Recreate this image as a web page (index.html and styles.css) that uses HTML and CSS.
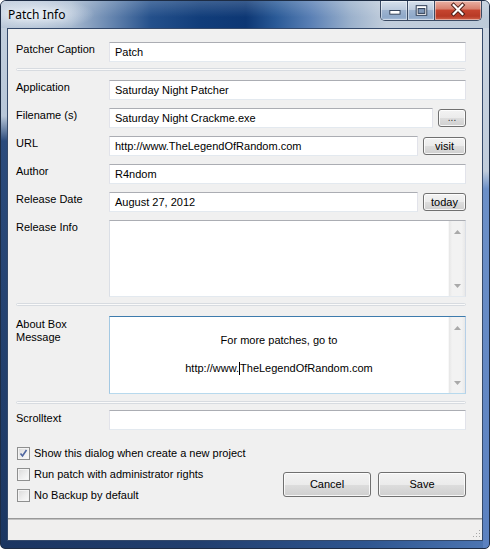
FILE: index.html
```html
<!DOCTYPE html>
<html>
<head>
<meta charset="utf-8">
<title>Patch Info</title>
<link rel="stylesheet" href="styles.css">
</head>
<body>
<div class="window">
  <div class="titlebar">
    <span class="title">Patch Info</span>
    <div class="caption-btns">
      <div class="cb cb-min">
        <svg width="28" height="20" viewBox="0 0 28 20"><rect x="9.5" y="10.5" width="11" height="4" fill="#fff" stroke="#2b3a52" stroke-width="1"/></svg>
      </div>
      <div class="cb cb-max">
        <svg width="27" height="20" viewBox="0 0 27 20"><rect x="8.5" y="5.5" width="11" height="10" fill="#fff" stroke="#2b3a52" stroke-width="1"/><rect x="10.5" y="8.5" width="7" height="5" fill="#7f97b8" stroke="#2b3a52" stroke-width="1"/></svg>
      </div>
      <div class="cb cb-close">
        <svg width="47" height="20" viewBox="0 0 47 20"><path d="M19 5 L28 14 M28 5 L19 14" stroke="#4a1c16" stroke-width="4.2" stroke-linecap="square"/><path d="M19 5 L28 14 M28 5 L19 14" stroke="#fff" stroke-width="2.2" stroke-linecap="square"/></svg>
      </div>
    </div>
  </div>

  <div class="client">
    <div class="form">
      <div class="row">
        <span class="lbl">Patcher Caption</span>
        <div class="input">Patch</div>
      </div>
      <div class="sep sep1"></div>

      <div class="group">
        <div class="row">
          <span class="lbl">Application</span>
          <div class="input">Saturday Night Patcher</div>
        </div>
        <div class="row">
          <span class="lbl">Filename (s)</span>
          <div class="field">
            <div class="input">Saturday Night Crackme.exe</div>
            <div class="btn btn-dots">...</div>
          </div>
        </div>
        <div class="row">
          <span class="lbl">URL</span>
          <div class="field">
            <div class="input">http://www.TheLegendOfRandom.com</div>
            <div class="btn btn-small">visit</div>
          </div>
        </div>
        <div class="row">
          <span class="lbl">Author</span>
          <div class="input">R4ndom</div>
        </div>
        <div class="row">
          <span class="lbl">Release Date</span>
          <div class="field">
            <div class="input">August 27, 2012</div>
            <div class="btn btn-small">today</div>
          </div>
        </div>
        <div class="row">
          <span class="lbl lbl-ta">Release Info</span>
          <div class="textarea ta-info">
            <div class="ta-content"></div>
            <div class="vscroll">
              <svg width="7" height="4" viewBox="0 0 7 4"><path d="M0 4 L3.5 0 L7 4Z" fill="#a9a9a9"/></svg>
              <svg width="7" height="4" viewBox="0 0 7 4"><path d="M0 0 L3.5 4 L7 0Z" fill="#a9a9a9"/></svg>
            </div>
          </div>
        </div>
      </div>
      <div class="sep sep2"></div>

      <div class="row">
        <span class="lbl lbl-ta2">About Box<br>Message</span>
        <div class="textarea ta-about">
          <div class="ta-content about-text"><div>&nbsp;</div><div>For more patches, go to</div><div>&nbsp;</div><div>http://www.<span class="caret"></span>TheLegendOfRandom.com</div></div>
          <div class="vscroll">
            <svg width="7" height="4" viewBox="0 0 7 4"><path d="M0 4 L3.5 0 L7 4Z" fill="#a9a9a9"/></svg>
            <svg width="7" height="4" viewBox="0 0 7 4"><path d="M0 0 L3.5 4 L7 0Z" fill="#a9a9a9"/></svg>
          </div>
        </div>
      </div>
      <div class="sep sep3"></div>

      <div class="row">
        <span class="lbl lbl-scroll">Scrolltext</span>
        <div class="input"></div>
      </div>
    </div>

    <div class="bottom">
      <div class="checks">
        <div class="check">
          <span class="box checked"><svg width="11" height="11" viewBox="0 0 11 11"><path d="M2.5 5.5 L4.5 8 L8.5 2" fill="none" stroke="#4f66a0" stroke-width="1.6"/></svg></span>
          <span>Show this dialog when create a new project</span>
        </div>
        <div class="check">
          <span class="box"></span>
          <span>Run patch with administrator rights</span>
        </div>
        <div class="check">
          <span class="box"></span>
          <span>No Backup by default</span>
        </div>
      </div>
      <div class="actions">
        <div class="btn btn-big">Cancel</div>
        <div class="btn btn-big">Save</div>
      </div>
    </div>

    <div class="statusbar">
      <svg class="grip" width="10" height="10" viewBox="0 0 10 10">
        <rect x="8" y="1" width="1" height="1" fill="#a8a8a8"/>
        <rect x="5" y="4" width="1" height="1" fill="#a8a8a8"/>
        <rect x="8" y="4" width="1" height="1" fill="#a8a8a8"/>
        <rect x="2" y="7" width="1" height="1" fill="#a8a8a8"/>
        <rect x="5" y="7" width="1" height="1" fill="#a8a8a8"/>
        <rect x="8" y="7" width="1" height="1" fill="#a8a8a8"/>
      </svg>
    </div>
  </div>
</div>
</body>
</html>
```

FILE: styles.css
```css
* { box-sizing: border-box; }

html, body {
  margin: 0;
  padding: 0;
}

body {
  width: 490px;
  height: 549px;
  background: #ffffff;
  font-family: "Liberation Sans", Arial, sans-serif;
  font-size: 11px;
  color: #000;
  overflow: hidden;
}

.window {
  width: 490px;
  height: 549px;
  display: flex;
  flex-direction: column;
  border: 1px solid #1d2c44;
  border-radius: 6px 6px 5px 5px;
  overflow: hidden;
  background:
    linear-gradient(180deg, #c6d2df 0, #b7c6d8 115px, #2b4b7c 140px, #1b3661 100%) 0 0 / 6px 100% no-repeat,
    linear-gradient(180deg, #ccd6e2 0, #c0ccdb 170px, #6c90c8 188px, #5b81c0 100%) 100% 0 / 6px 100% no-repeat,
    linear-gradient(90deg, #1b3561 0, #223f6e 40%, #2f5690 75%, #4d76b3 100%);
}

/* ---------- title bar ---------- */
.titlebar {
  height: 27px;
  flex: none;
  display: flex;
  justify-content: space-between;
  align-items: flex-start;
  padding-left: 7px;
  background:
    radial-gradient(ellipse 60px 16px at 34px 13px, rgba(235, 241, 248, 0.95), rgba(235, 241, 248, 0)),
    linear-gradient(180deg, rgba(255, 255, 255, 0.18), rgba(255, 255, 255, 0) 60%),
    linear-gradient(90deg, #b9c7d8 0, #a8bad0 70px, #5e7fab 115px, #24508b 150px, #113d7a 200px, #0d3774 245px, #2a5a97 275px, #5a80b5 310px, #9bb1cc 350px, #c2cedc 385px, #bccad9 490px);
}

.title {
  font-family: "Noto Sans", "Open Sans", sans-serif;
  font-size: 12px;
  line-height: 16px;
  padding-top: 6px;
  color: #000;
  text-shadow: 0 0 6px rgba(255, 255, 255, 0.9);
}

.caption-btns {
  display: flex;
  margin-right: 7px;
  height: 20px;
  border: 1px solid #3a4a63;
  border-top: none;
  border-radius: 0 0 5px 5px;
  overflow: hidden;
}

.cb {
  height: 19px;
  display: flex;
  box-shadow: inset 0 0 0 1px rgba(255, 255, 255, 0.45);
}

.cb svg { display: block; }

.cb-min {
  width: 27px;
  border-right: 1px solid #3a4a63;
  background: linear-gradient(180deg, #d7e1ec 0, #bccbdd 45%, #9db3cf 50%, #8ea8c9 85%, #a9bdd6 100%);
}

.cb-max {
  width: 27px;
  border-right: 1px solid #3a4a63;
  background: linear-gradient(180deg, #d7e1ec 0, #bccbdd 45%, #9db3cf 50%, #8ea8c9 85%, #a9bdd6 100%);
}

.cb-max svg, .cb-min svg { margin-top: -1px; }

.cb-close {
  width: 46px;
  background: linear-gradient(180deg, #eab1a4 0, #d98270 40%, #c5442f 50%, #b83a26 80%, #d1644d 100%);
}

.cb-close svg { margin-top: -1px; }

/* ---------- client ---------- */
.client {
  flex: none;
  height: 513px;
  margin: 0 6px;
  border: 1px solid #34496a;
  background: #f0f0f0;
  display: flex;
  flex-direction: column;
}

.form {
  padding: 13px 16px 0 8px;
  display: flex;
  flex-direction: column;
}

.group {
  display: flex;
  flex-direction: column;
  gap: 8px;
}

.row {
  display: grid;
  grid-template-columns: 93px 1fr;
  align-items: start;
}

.lbl {
  line-height: 13px;
  padding-top: 1px;
  white-space: nowrap;
}

.lbl-ta { padding-top: 1px; }
.lbl-ta2 { padding-top: 2px; }
.lbl-scroll { padding-top: 2px; }

.input {
  height: 20px;
  line-height: 13px;
  padding: 3px 5px;
  background: #fff;
  border: 1px solid #e2e3ea;
  border-top-color: #abadb3;
  border-bottom-color: #e3e9ef;
  white-space: nowrap;
  overflow: hidden;
}

.field {
  display: flex;
  align-items: center;
  gap: 5px;
}

.field .input { flex: 1; min-width: 0; }

.btn {
  display: flex;
  align-items: center;
  justify-content: center;
  border: 1px solid #707070;
  border-radius: 3px;
  background: linear-gradient(180deg, #f3f3f3 0, #ebebeb 50%, #dddddd 51%, #cfcfcf 100%);
  box-shadow: inset 0 0 0 1px rgba(255, 255, 255, 0.8);
  line-height: 13px;
  flex: none;
}

.btn-dots {
  width: 28px;
  height: 18px;
  color: #333;
  font-size: 10px;
  padding-bottom: 2px;
}

.btn-small {
  width: 43px;
  height: 18px;
}

.btn-big {
  width: 88px;
  height: 25px;
}

.sep {
  height: 3px;
  border: 1px solid #d7dbe0;
  border-radius: 2px;
  background: #fafafa;
}

.sep1 { margin: 6px 0 9px 0; }
.sep2 { margin: 6px 0 10px 0; }
.sep3 { margin: 7px 0 6px 0; }

.textarea {
  display: flex;
  background: #fff;
  border: 1px solid #dbdfe6;
  border-top-color: #abadb3;
  border-bottom-color: #e3e9ef;
}

.ta-info { height: 77px; }

.ta-about {
  height: 78px;
  border-color: #b5cfe7;
  border-top-color: #3d7bad;
  border-left-color: #a4c9e3;
  border-bottom-color: #b7d9ed;
}

.ta-content {
  flex: 1;
  min-width: 0;
}

.about-text {
  text-align: center;
  line-height: 14px;
  padding-top: 2px;
  white-space: nowrap;
}

.caret {
  display: inline-block;
  width: 1px;
  height: 13px;
  background: #000;
  vertical-align: -3px;
}

.vscroll {
  width: 17px;
  flex: none;
  display: flex;
  flex-direction: column;
  align-items: center;
  justify-content: space-between;
  padding: 9px 0 8px;
  background: linear-gradient(90deg, #e6e6e6 0, #f2f2f2 20%, #f2f2f2 80%, #e8e8e8 100%);
  border-left: 1px solid #f8f8f8;
}

.vscroll svg { display: block; }

/* ---------- bottom ---------- */
.bottom {
  flex: 1;
  display: flex;
  justify-content: space-between;
  align-items: flex-start;
  padding: 17px 16px 0 9px;
}

.checks {
  display: flex;
  flex-direction: column;
  gap: 8px;
}

.check {
  display: flex;
  align-items: center;
  gap: 4px;
  height: 13px;
  line-height: 13px;
  white-space: nowrap;
}

.box {
  width: 13px;
  height: 13px;
  flex: none;
  border: 1px solid #8e8f8f;
  background: linear-gradient(135deg, #d9d9d9 0, #eeeeee 55%, #fbfbfb 100%);
  box-shadow: inset 0 0 0 1px #f4f4f4;
  display: flex;
  align-items: center;
  justify-content: center;
}

.box svg { display: block; }

.actions {
  display: flex;
  gap: 7px;
  margin-top: 25px;
}

.statusbar {
  height: 22px;
  flex: none;
  border-top: 1px solid #999999;
  box-shadow: inset 0 1px 0 #c2c2c2;
  background: #f0efee;
  display: flex;
  justify-content: flex-end;
  align-items: flex-end;
  padding: 0 1px 1px 0;
}

.grip { display: block; }
```
